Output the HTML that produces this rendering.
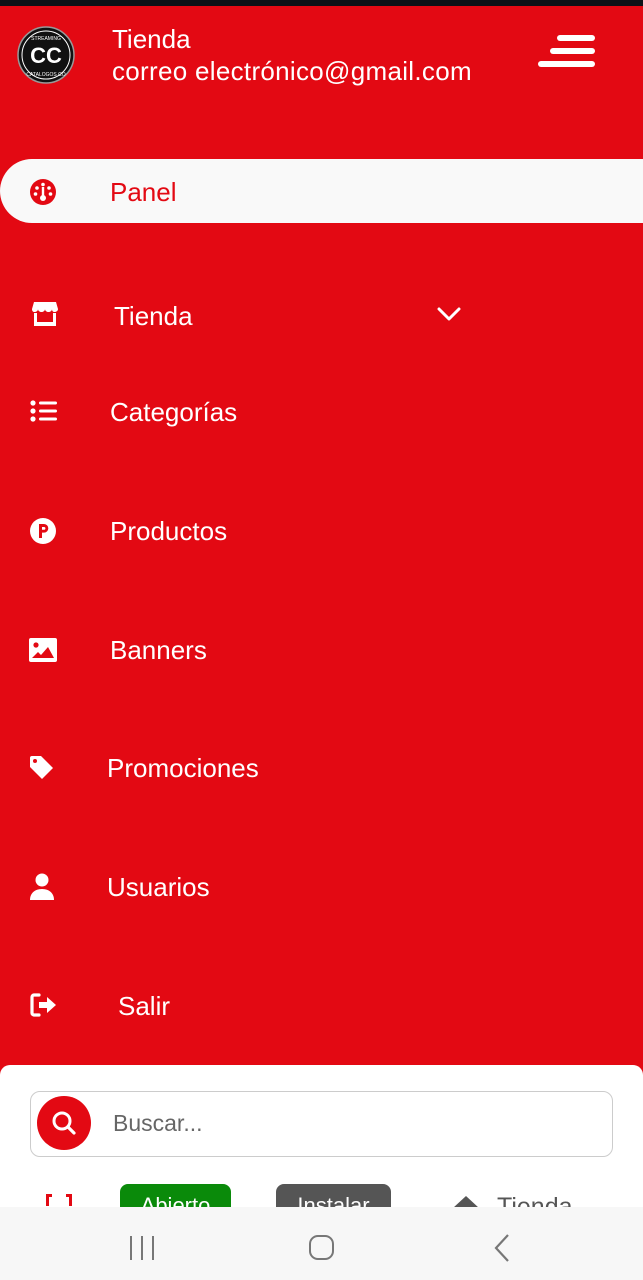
<!DOCTYPE html>
<html><head><meta charset="utf-8">
<style>
*{margin:0;padding:0;box-sizing:border-box}
html,body{width:643px;height:1280px;overflow:hidden}
body{background:#e30913;font-family:"Liberation Sans",Roboto,sans-serif;position:relative;color:#fff}
.abs{position:absolute}
.item{position:absolute;font-size:26px;line-height:30px;color:#fff}
.ic{position:absolute}
</style></head><body>
<div class="abs" style="left:0;top:0;width:643px;height:6px;background:#0d1117"></div>

<svg class="ic" style="left:17px;top:26px" width="58" height="58" viewBox="0 0 58 58">
<circle cx="29" cy="29" r="28" fill="#111" stroke="#999" stroke-width="1.5"/>
<circle cx="29" cy="29" r="24" fill="none" stroke="#fff" stroke-width="1"/>
<text x="29" y="37" text-anchor="middle" font-family="Liberation Sans" font-weight="bold" font-size="22" fill="#fff">CC</text>
<text x="29" y="14" text-anchor="middle" font-family="Liberation Sans" font-size="5" fill="#fff">STREAMING</text>
<text x="29" y="50" text-anchor="middle" font-family="Liberation Sans" font-size="5" fill="#fff">CATALOGOS CO</text>
</svg>
<div class="abs" style="left:112px;top:24px;font-size:26px;line-height:30px">Tienda</div>
<div class="abs" style="left:112px;top:56px;font-size:26px;line-height:30px;letter-spacing:0.3px">correo electrónico@gmail.com</div>
<div class="abs" style="left:557px;top:35px;width:38px;height:6px;border-radius:3px;background:#fff"></div>
<div class="abs" style="left:550px;top:48px;width:45px;height:6px;border-radius:3px;background:#fff"></div>
<div class="abs" style="left:538px;top:61px;width:57px;height:6px;border-radius:3px;background:#fff"></div>

<div class="abs" style="left:0;top:159px;width:643px;height:64px;background:#f9f9f9;border-radius:32px 0 0 32px"></div>
<svg class="ic" style="left:29px;top:178px" width="28" height="28" viewBox="0 0 28 28">
<circle cx="14" cy="14" r="13" fill="#e30913"/>
<circle cx="14" cy="6.5" r="1.8" fill="#fff"/><circle cx="8" cy="10" r="1.8" fill="#fff"/><circle cx="20" cy="10" r="1.8" fill="#fff"/>
<circle cx="6.5" cy="16" r="1.8" fill="#fff"/><circle cx="21.5" cy="16" r="1.8" fill="#fff"/>
<rect x="12.8" y="9" width="2.4" height="10" fill="#fff"/><circle cx="14" cy="20" r="3" fill="#fff"/>
</svg>
<div class="item" style="left:110px;top:177px;color:#e30913">Panel</div>

<svg class="ic" style="left:31px;top:301px" width="28" height="26" viewBox="0 0 28 26">
<path d="M3 1h22l2 7c0 2-2 3-3.5 3S21 10 21 8c0 2-2 3-3.5 3S14 10 14 8c0 2-2 3-3.5 3S7 10 7 8c0 2-2 3-3.5 3S1 10 1 8z" fill="#fff"/>
<path d="M3 12v13h22V12h-3v9H6v-9z" fill="#fff"/>
</svg>
<div class="item" style="left:114px;top:301px">Tienda</div>
<svg class="ic" style="left:437px;top:306px" width="24" height="16" viewBox="0 0 24 16"><path d="M2 3l10 10L22 3" fill="none" stroke="#fff" stroke-width="3" stroke-linecap="round" stroke-linejoin="round"/></svg>

<svg class="ic" style="left:30px;top:400px" width="28" height="22" viewBox="0 0 28 22">
<circle cx="3" cy="3" r="2.6" fill="#fff"/><circle cx="3" cy="11" r="2.6" fill="#fff"/><circle cx="3" cy="19" r="2.6" fill="#fff"/>
<rect x="9" y="1.5" width="18" height="3" rx="1.5" fill="#fff"/><rect x="9" y="9.5" width="18" height="3" rx="1.5" fill="#fff"/><rect x="9" y="17.5" width="18" height="3" rx="1.5" fill="#fff"/>
</svg>
<div class="item" style="left:110px;top:397px">Categorías</div>

<svg class="ic" style="left:29px;top:517px" width="28" height="28" viewBox="0 0 28 28">
<circle cx="14" cy="14" r="13" fill="#fff"/>
<path d="M10 21V7h5a4.3 4.3 0 0 1 0 8.6h-2V21z M13 10v2.8h2a1.4 1.4 0 0 0 0-2.8z" fill="#e30913" fill-rule="evenodd"/>
</svg>
<div class="item" style="left:110px;top:516px">Productos</div>

<svg class="ic" style="left:29px;top:638px" width="28" height="24" viewBox="0 0 28 24">
<rect x="0" y="0" width="28" height="24" rx="2" fill="#fff"/>
<circle cx="7" cy="7" r="2.6" fill="#e30913"/>
<path d="M3 20l6-6 3 3 7-8 6 11z" fill="#e30913"/>
</svg>
<div class="item" style="left:110px;top:635px">Banners</div>

<svg class="ic" style="left:29px;top:755px" width="26" height="26" viewBox="0 0 26 26">
<path d="M1 3a2 2 0 0 1 2-2h9l12 12-11 11L1 12z" fill="#fff"/>
<circle cx="6" cy="6" r="2" fill="#e30913"/>
</svg>
<div class="item" style="left:107px;top:753px">Promociones</div>

<svg class="ic" style="left:29px;top:873px" width="26" height="28" viewBox="0 0 26 28">
<circle cx="13" cy="7" r="6.5" fill="#fff"/>
<path d="M1 27c0-7 5-11 12-11s12 4 12 11z" fill="#fff"/>
</svg>
<div class="item" style="left:107px;top:872px">Usuarios</div>

<svg class="ic" style="left:30px;top:993px" width="28" height="24" viewBox="0 0 28 24">
<path d="M9 2H4a2 2 0 0 0-2 2v16a2 2 0 0 0 2 2h5" fill="none" stroke="#fff" stroke-width="3.2" stroke-linecap="round"/>
<path d="M9 9h8V4l9 8-9 8v-5H9z" fill="#fff"/>
</svg>
<div class="item" style="left:118px;top:991px">Salir</div>

<div class="abs" style="left:0;top:1065px;width:643px;height:215px;background:#fff;border-radius:10px 10px 0 0"></div>
<div class="abs" style="left:30px;top:1091px;width:583px;height:66px;border:1px solid #ccc;border-radius:10px;background:#fff"></div>
<div class="abs" style="left:37px;top:1096px;width:54px;height:54px;border-radius:50%;background:#e30913"></div>
<svg class="ic" style="left:50px;top:1109px" width="28" height="28" viewBox="0 0 28 28">
<circle cx="12" cy="12" r="8" fill="none" stroke="#fff" stroke-width="3"/>
<path d="M18 18l6 6" stroke="#fff" stroke-width="3.2" stroke-linecap="round"/>
</svg>
<div class="abs" style="left:113px;top:1109px;font-size:23px;line-height:28px;color:#666">Buscar...</div>

<div class="abs" style="left:46px;top:1194px;width:6px;height:12px;border:3px solid #e30913;border-right:none;border-bottom:none"></div>
<div class="abs" style="left:66px;top:1194px;width:6px;height:12px;border:3px solid #e30913;border-left:none;border-bottom:none"></div>
<div class="abs" style="left:120px;top:1184px;width:111px;height:40px;background:#0a8a0a;border-radius:8px;color:#fff;font-size:22px;text-align:center;line-height:44px">Abierto</div>
<div class="abs" style="left:276px;top:1184px;width:115px;height:40px;background:#555;border-radius:8px;color:#fff;font-size:22px;text-align:center;line-height:44px">Instalar</div>
<div class="abs" style="left:453px;top:1196px;width:0;height:0;border-left:13px solid transparent;border-right:13px solid transparent;border-bottom:12px solid #555"></div>
<div class="abs" style="left:497px;top:1193px;font-size:25px;line-height:28px;color:#555">Tienda</div>

<div class="abs" style="left:0;top:1207px;width:643px;height:73px;background:#f7f7f7"></div>
<div class="abs" style="left:130px;top:1236px;width:2px;height:24px;background:#777"></div>
<div class="abs" style="left:141px;top:1236px;width:2px;height:24px;background:#777"></div>
<div class="abs" style="left:152px;top:1236px;width:2px;height:24px;background:#777"></div>
<div class="abs" style="left:309px;top:1235px;width:25px;height:25px;border:2px solid #777;border-radius:9px"></div>
<svg class="ic" style="left:492px;top:1233px" width="20" height="30" viewBox="0 0 20 30"><path d="M16 2L4 15l12 13" fill="none" stroke="#777" stroke-width="2.2"/></svg>
</body></html>
